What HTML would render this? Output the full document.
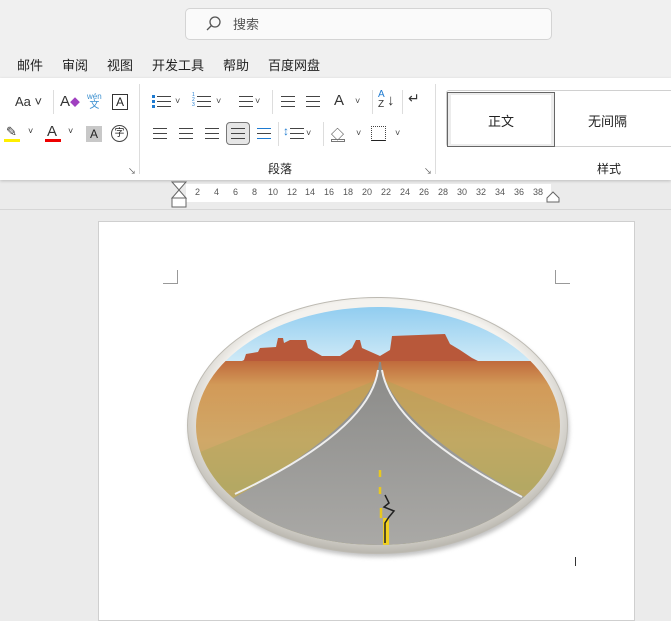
<!DOCTYPE html>
<html><head><meta charset="utf-8"><style>
*{margin:0;padding:0;box-sizing:border-box}
body{width:671px;height:604px;overflow:hidden;background:#ebebeb;font-family:"Liberation Sans","Noto Sans CJK SC",sans-serif;position:relative;color:#222}
.a{position:absolute}
.t{font-size:13px;color:#222}
.ic{position:absolute;font-size:13px;color:#333}
.lines{position:absolute;width:14px;height:11px;border-top:1.5px solid #444;border-bottom:1.5px solid #444}
.lines:after{content:"";position:absolute;left:0;right:0;top:3.5px;border-top:1.5px solid #444}
.car{position:absolute;font-size:9px;color:#444}
.rl{position:absolute;top:187px;font-size:9px;color:#555}
</style></head><body>
<div class="a" style="left:0;top:0;width:671px;height:78px;background:#f0f0f0"></div>
<div class="a" style="left:185px;top:8px;width:367px;height:32px;background:#fafafa;border:1px solid #d4d4d4;border-radius:5px"></div>
<svg class="a" style="left:204px;top:14px" width="18" height="18"><circle cx="11" cy="8" r="5" fill="none" stroke="#555" stroke-width="1.3"/><line x1="7.5" y1="11.5" x2="3" y2="16" stroke="#555" stroke-width="1.3"/></svg>
<div class="a t" style="left:233px;top:14px;color:#555">搜索</div>
<div class="a t" style="left:17px;top:55px">邮件</div>
<div class="a t" style="left:62px;top:55px">审阅</div>
<div class="a t" style="left:107px;top:55px">视图</div>
<div class="a t" style="left:152px;top:55px">开发工具</div>
<div class="a t" style="left:223px;top:55px">帮助</div>
<div class="a t" style="left:268px;top:55px">百度网盘</div>
<div class="a" style="left:0;top:78px;width:671px;height:102px;background:#fff;box-shadow:0 1px 3px rgba(0,0,0,.2)"></div>
<div class="a" style="left:139px;top:84px;width:1px;height:90px;background:#ddd"></div>
<div class="a" style="left:435px;top:84px;width:1px;height:90px;background:#ddd"></div>
<div class="ic" style="left:15px;top:94px">Aa ˅</div>
<div class="a" style="left:53px;top:90px;width:1px;height:24px;background:#ddd"></div>
<div class="ic" style="left:60px;top:93px;font-size:15px">A<span style="color:#a040c0;font-size:10px">◆</span></div>
<div class="ic" style="left:87px;top:92px;font-size:8px;color:#3a8fd0;line-height:9px;text-align:center">wén<br><span style="font-size:10px">文</span></div>
<div class="a" style="left:112px;top:94px;width:16px;height:16px;border:1px solid #333;font-size:12px;text-align:center;line-height:14px">A</div>
<div class="ic" style="left:6px;top:124px;font-size:13px">✎</div><div class="a" style="left:4px;top:139px;width:16px;height:3px;background:#ffef00"></div><div class="ic" style="left:28px;top:126px;font-size:9px">˅</div>
<div class="ic" style="left:47px;top:123px;font-size:15px">A</div><div class="a" style="left:45px;top:139px;width:16px;height:3px;background:#e00"></div><div class="ic" style="left:68px;top:126px;font-size:9px">˅</div>
<div class="a" style="left:86px;top:126px;width:16px;height:16px;background:#c8c8c8;font-size:12px;text-align:center;line-height:16px">A</div>
<div class="a" style="left:111px;top:125px;width:17px;height:17px;border:1.3px solid #444;border-radius:50%;font-size:10px;text-align:center;line-height:15px">字</div>
<div class="a" style="left:128px;top:166px;font-size:8px;color:#555">↘</div>
<div class="lines" style="left:157px;top:96px"></div><div class="a" style="left:152px;top:95px;width:3px;height:13px;border-left:3px dotted #1e7ad0"></div><div class="car" style="left:175px;top:96px">˅</div>
<div class="lines" style="left:197px;top:96px"></div><div class="a" style="left:192px;top:93px;font-size:5px;color:#1e7ad0;line-height:5px">1<br>2<br>3</div><div class="car" style="left:216px;top:96px">˅</div>
<div class="lines" style="left:239px;top:96px"></div><div class="car" style="left:255px;top:96px">˅</div>
<div class="a" style="left:272px;top:90px;width:1px;height:24px;background:#ddd"></div>
<div class="lines" style="left:281px;top:96px"></div>
<div class="lines" style="left:306px;top:96px"></div>
<div class="ic" style="left:334px;top:92px;font-size:15px">A</div><div class="car" style="left:355px;top:96px">˅</div>
<div class="a" style="left:372px;top:90px;width:1px;height:24px;background:#ddd"></div>
<div class="ic" style="left:378px;top:90px;font-size:10px;color:#1e7ad0;line-height:10px">A<br><span style="color:#333">Z</span></div><div class="ic" style="left:387px;top:92px;font-size:15px">↓</div>
<div class="a" style="left:402px;top:90px;width:1px;height:24px;background:#ddd"></div>
<div class="ic" style="left:408px;top:90px;font-size:14px">↵</div>
<div class="lines" style="left:153px;top:128px"></div>
<div class="lines" style="left:179px;top:128px"></div>
<div class="lines" style="left:205px;top:128px"></div>
<div class="a" style="left:226px;top:122px;width:24px;height:23px;background:#e6e6e6;border:1px solid #777;border-radius:4px"></div>
<div class="lines" style="left:231px;top:128px"></div>
<div class="lines" style="left:257px;top:128px;border-color:#1e7ad0"></div>
<div class="a" style="left:278px;top:122px;width:1px;height:24px;background:#ddd"></div>
<div class="lines" style="left:290px;top:128px"></div><div class="ic" style="left:283px;top:124px;color:#1e7ad0;font-size:12px">↕</div><div class="car" style="left:306px;top:128px">˅</div>
<div class="a" style="left:323px;top:122px;width:1px;height:24px;background:#ddd"></div>
<div class="ic" style="left:331px;top:124px;font-size:13px">◇</div><div class="a" style="left:331px;top:139px;width:14px;height:3px;border:1px solid #777"></div><div class="car" style="left:356px;top:128px">˅</div>
<div class="a" style="left:371px;top:126px;width:15px;height:15px;border:1px dotted #444;border-bottom:1.5px solid #222"></div><div class="car" style="left:395px;top:128px">˅</div>
<div class="a t" style="left:268px;top:160px;font-size:12px">段落</div>
<div class="a" style="left:424px;top:166px;font-size:8px;color:#555">↘</div>
<div class="a" style="left:446px;top:90px;width:230px;height:57px;border:1px solid #d0d0d0;border-radius:3px"></div>
<div class="a" style="left:447px;top:92px;width:108px;height:55px;border:1px solid #666;background:#ececec"></div>
<div class="a" style="left:451px;top:95px;width:100px;height:49px;background:#fff"></div>
<div class="a t" style="left:488px;top:111px">正文</div>
<div class="a t" style="left:588px;top:111px">无间隔</div>
<div class="a t" style="left:597px;top:160px;font-size:12px">样式</div>
<div class="a" style="left:186px;top:184px;width:365px;height:18px;background:#fff"></div>
<svg class="a" style="left:170px;top:181px" width="20" height="30"><path d="M2 1H16L9 9Z M9 9L2 17H16Z" fill="#fff" stroke="#666"/><rect x="2" y="17" width="14" height="9" fill="#fff" stroke="#666"/></svg>
<svg class="a" style="left:546px;top:191px" width="16" height="12"><path d="M1 11V7L7 1L13 7V11Z" fill="#fff" stroke="#666"/></svg>
<div class="rl" style="left:195px">2</div><div class="rl" style="left:214px">4</div><div class="rl" style="left:233px">6</div><div class="rl" style="left:252px">8</div><div class="rl" style="left:268px">10</div><div class="rl" style="left:287px">12</div><div class="rl" style="left:305px">14</div><div class="rl" style="left:324px">16</div><div class="rl" style="left:343px">18</div><div class="rl" style="left:362px">20</div><div class="rl" style="left:381px">22</div><div class="rl" style="left:400px">24</div><div class="rl" style="left:419px">26</div><div class="rl" style="left:438px">28</div><div class="rl" style="left:457px">30</div><div class="rl" style="left:476px">32</div><div class="rl" style="left:495px">34</div><div class="rl" style="left:514px">36</div><div class="rl" style="left:533px">38</div>
<div class="a" style="left:0;top:209px;width:671px;height:1px;background:#d6d6d6"></div>
<div class="a" style="left:98px;top:221px;width:537px;height:400px;background:#fff;border:1px solid #cfcfcf"></div>
<div class="a" style="left:163px;top:270px;width:15px;height:14px;border-right:1px solid #999;border-bottom:1px solid #999"></div>
<div class="a" style="left:555px;top:270px;width:15px;height:14px;border-left:1px solid #999;border-bottom:1px solid #999"></div>
<div class="a" style="left:575px;top:557px;width:1px;height:9px;background:#333"></div>
<svg class="a" style="left:180px;top:290px" width="400" height="275">
<defs>
<radialGradient id="fr" cx="50%" cy="45%" r="55%"><stop offset=".8" stop-color="#f4f2ee"/><stop offset="1" stop-color="#b8b5ad"/></radialGradient>
<linearGradient id="sky" x1="0" y1="0" x2="0" y2="1"><stop offset="0" stop-color="#7ec4ee"/><stop offset="1" stop-color="#d8eef8"/></linearGradient>
<linearGradient id="ds" x1="0" y1="0" x2="0" y2="1"><stop offset="0" stop-color="#c06a3c"/><stop offset=".12" stop-color="#d29a58"/><stop offset=".4" stop-color="#d0a868"/><stop offset=".7" stop-color="#b8a868"/><stop offset="1" stop-color="#a0a060"/></linearGradient>
<linearGradient id="rd" x1="0" y1="0" x2="0" y2="1"><stop offset="0" stop-color="#8a8a88"/><stop offset="1" stop-color="#aeadaa"/></linearGradient>
<clipPath id="c"><ellipse cx="198" cy="136" rx="182" ry="119"/></clipPath>
<filter id="sh"><feGaussianBlur stdDeviation="2"/></filter>
</defs>
<ellipse cx="199" cy="139" rx="190" ry="128" fill="#999" filter="url(#sh)" opacity=".6"/>
<ellipse cx="197.5" cy="135.5" rx="190" ry="128" fill="url(#fr)" stroke="#bdbab2"/>
<g clip-path="url(#c)">
<rect x="0" y="0" width="400" height="80" fill="url(#sky)"/>
<path d="M60 72L64 70L66 64L78 62L80 58L96 57L98 48L103 48L104 53L110 50L126 50L128 58L142 66L160 66L172 58L176 50L180 50L182 58L200 66L210 60L212 46L265 44L270 54L280 60L292 68L300 72Z" fill="#b8583a"/>
<rect x="0" y="71" width="400" height="200" fill="url(#ds)"/>
<path d="M0 170Q100 130 196 90L150 200H0Z" fill="#9ea858" opacity=".3"/>
<path d="M400 170Q300 130 205 90L250 200H400Z" fill="#9ea858" opacity=".3"/>
<path d="M199 72L201 72Q205 130 350 210L400 260V280H0V260L50 210Q195 130 199 72Z" fill="url(#rd)"/>
<path d="M198 80Q190 140 55 204" stroke="#eee" stroke-width="2" fill="none"/>
<path d="M202 80Q212 140 342 207" stroke="#eee" stroke-width="2" fill="none"/>
<path d="M200 180v7M200 197v7M201 218v10" stroke="#e8c820" stroke-width="2.5"/>
<rect x="203" y="228" width="6" height="27" fill="#f0d020"/>
<path d="M205 205l4 8-5 4 10 4-5 6-4 6 0 20" stroke="#222" stroke-width="1.5" fill="none"/>
</g>
</svg>
</body></html>
